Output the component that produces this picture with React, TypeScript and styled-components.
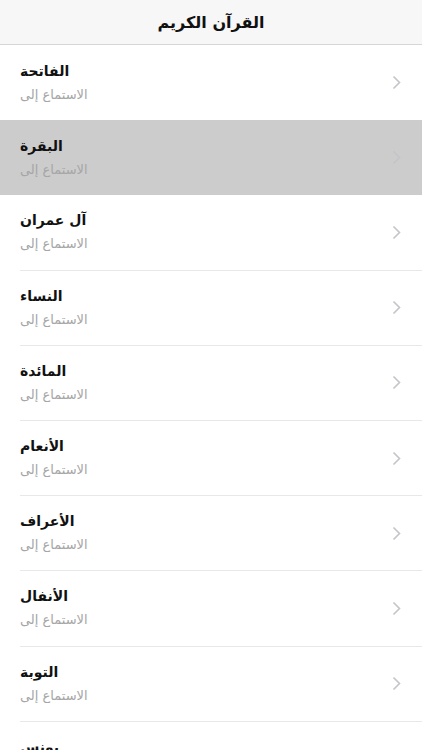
import React from "react";
import styled, { createGlobalStyle } from "styled-components";

const GlobalStyle = createGlobalStyle`
  html, body {
    margin: 0;
    padding: 0;
    background: #ffffff;
    font-family: "DejaVu Sans", "Noto Sans", sans-serif;
  }
`;

const Page = styled.div`
  width: 422px;
  height: 750px;
  overflow: hidden;
  background: #ffffff;
`;

const NavBar = styled.div`
  height: 44px;
  display: flex;
  align-items: center;
  justify-content: center;
  background: #f7f7f7;
  border-bottom: 1px solid #d6d6d6;
`;

const Title = styled.h1`
  margin: 0;
  font-size: 16px;
  font-weight: bold;
  color: #111111;
`;

const List = styled.ul`
  margin: 0;
  padding: 0;
  list-style: none;
`;

const Row = styled.li<{ $selected?: boolean }>`
  height: 75.2px;
  box-sizing: border-box;
  display: flex;
  align-items: center;
  padding-left: 20px;
  background: ${(p) => (p.$selected ? "#cccccc" : "#ffffff")};
`;

const RowInner = styled.div<{ $plain?: boolean }>`
  flex: 1;
  height: 100%;
  display: flex;
  align-items: center;
  justify-content: space-between;
  padding-right: 21px;
  box-sizing: border-box;
  border-bottom: ${(p) => (p.$plain ? "none" : "1px solid #e8e8e8")};
`;

const Texts = styled.div`
  display: flex;
  flex-direction: column;
  align-items: flex-start;
  gap: 5px;
  margin-top: -1px;
`;

const Name = styled.span`
  font-size: 14px;
  font-weight: bold;
  color: #111111;
  line-height: 20px;
`;

const Sub = styled.span`
  font-size: 13px;
  color: #a6a6a6;
  line-height: 18px;
`;

const Chevron = () => (
  <svg width="9" height="15" viewBox="0 0 9 15">
    <path d="M1.5 1.5 L7.5 7.5 L1.5 13.5" fill="none" stroke="#c4c4c9" strokeWidth="1.6" />
  </svg>
);

const suras = [
  "الفاتحة",
  "البقرة",
  "آل عمران",
  "النساء",
  "المائدة",
  "الأنعام",
  "الأعراف",
  "الأنفال",
  "التوبة",
  "يونس",
];

const App = () => (
  <Page>
    <GlobalStyle />
    <NavBar>
      <Title>القرآن الكريم</Title>
    </NavBar>
    <List>
      {suras.map((s, i) => (
        <Row key={s} $selected={i === 1}>
          <RowInner $plain={i <= 1}>
            <Texts>
              <Name dir="rtl">{s}</Name>
              <Sub dir="rtl">الاستماع إلى</Sub>
            </Texts>
            <Chevron />
          </RowInner>
        </Row>
      ))}
    </List>
  </Page>
);

export default App;
